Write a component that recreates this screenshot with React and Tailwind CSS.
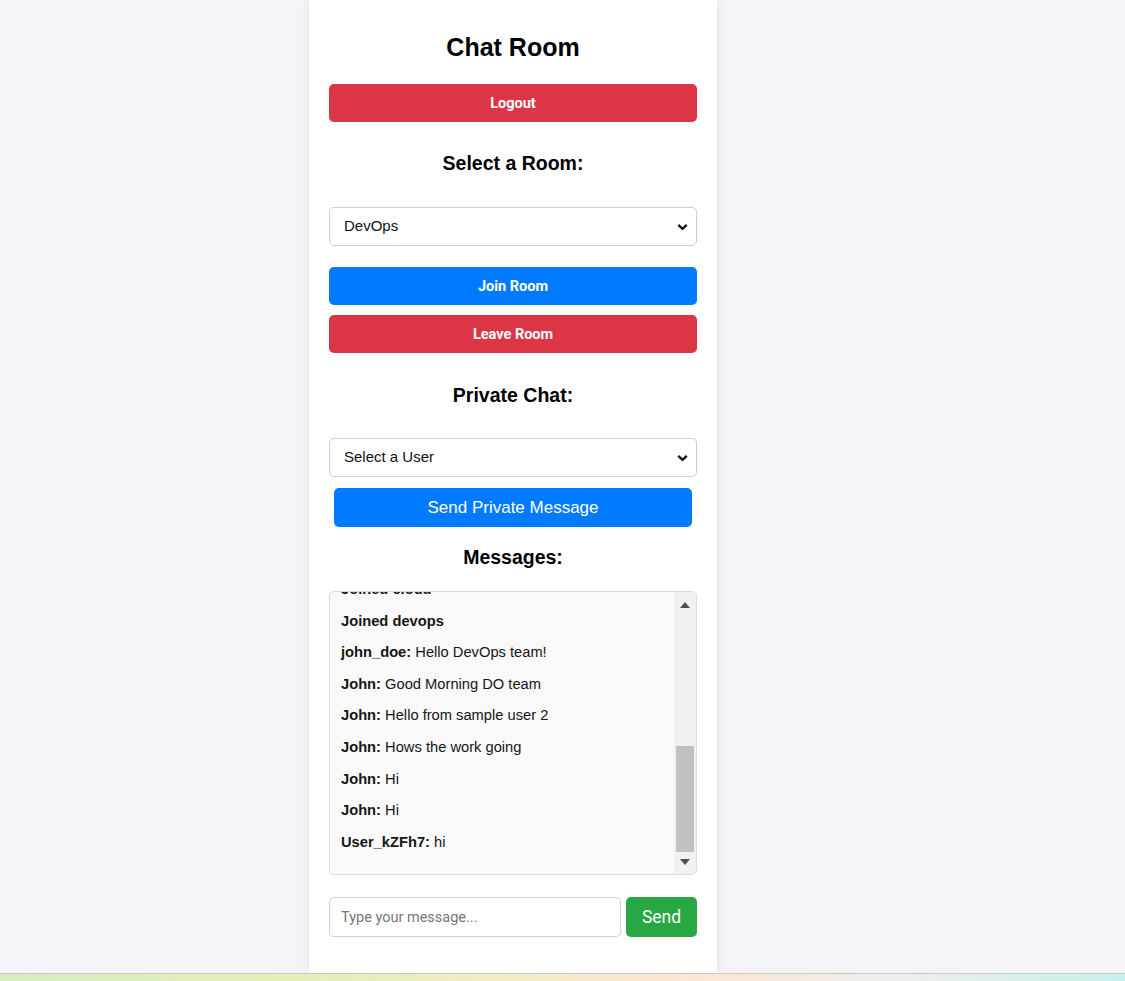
import { useState } from "react";

const messages = [
  { text: "Joined cloud" },
  { text: "Joined devops" },
  { user: "john_doe", text: "Hello DevOps team!" },
  { user: "John", text: "Good Morning DO team" },
  { user: "John", text: "Hello from sample user 2" },
  { user: "John", text: "Hows the work going" },
  { user: "John", text: "Hi" },
  { user: "John", text: "Hi" },
  { user: "User_kZFh7", text: "hi" },
];

const Chevron = () => (
  <svg
    className="pointer-events-none absolute right-[9px] top-1/2 -translate-y-1/2"
    width="11"
    height="7"
    viewBox="0 0 11 7"
  >
    <path d="M1.3 1.3 L5.5 5.3 L9.7 1.3" fill="none" stroke="#111" strokeWidth="2.4" />
  </svg>
);

function SelectBox({ value, options, onChange }) {
  return (
    <div className="relative">
      <select
        value={value}
        onChange={(e) => onChange(e.target.value)}
        className="block h-[39px] w-full appearance-none rounded-[5px] border border-[#cfcfcf] bg-white pl-[14px] text-[15px] text-[#111] outline-none"
      >
        {options.map((o) => (
          <option key={o}>{o}</option>
        ))}
      </select>
      <Chevron />
    </div>
  );
}

export default function App() {
  const [room, setRoom] = useState("DevOps");
  const [user, setUser] = useState("Select a User");
  const [draft, setDraft] = useState("");

  return (
    <div className="flex h-[981px] flex-col bg-[#f3f3f8] font-['Liberation_Sans',Arial,sans-serif]">
      <div className="flex-1 overflow-hidden">
        <div className="ml-[309px] h-full w-[408px] bg-white px-[20px] pt-[32px] shadow-[0_0_8px_rgba(0,0,0,0.08)]">
          <h2 className="h-[30px] text-center text-[25px] font-bold leading-[30px] text-black">
            Chat Room
          </h2>

          <button className="mt-[22px] block h-[38px] w-full rounded-[5px] bg-[#dc3545] pt-px font-['Roboto',sans-serif] text-[14.5px] font-bold text-white">
            Logout
          </button>

          <h3 className="mt-[29px] h-[24px] text-center text-[19.5px] font-bold leading-[24px] text-black">
            Select a Room:
          </h3>
          <div className="mt-[32px]">
            <SelectBox value={room} onChange={setRoom} options={["DevOps", "Cloud", "General"]} />
          </div>

          <button className="mt-[21px] block h-[38px] w-full rounded-[5px] bg-[#007bff] pt-px font-['Roboto',sans-serif] text-[14.5px] font-bold text-white">
            Join Room
          </button>
          <button className="mt-[10px] block h-[38px] w-full rounded-[5px] bg-[#dc3545] pt-px font-['Roboto',sans-serif] text-[14.5px] font-bold text-white">
            Leave Room
          </button>

          <h3 className="mt-[30px] h-[24px] text-center text-[19.5px] font-bold leading-[24px] text-black">
            Private Chat:
          </h3>
          <div className="mt-[31px]">
            <SelectBox value={user} onChange={setUser} options={["Select a User", "John", "john_doe"]} />
          </div>
          <button className="mx-[5px] mt-[11px] block h-[39px] w-[358px] rounded-[5px] bg-[#007bff] text-[17px] text-white">
            Send Private Message
          </button>

          <h3 className="mt-[18px] h-[24px] text-center text-[19.5px] font-bold leading-[24px] text-black">
            Messages:
          </h3>

          <div className="mt-[22px] flex h-[284px] overflow-hidden rounded-[5px] border border-[#dcdcdc] bg-[#f9f9f9]">
            <div className="flex-1 overflow-hidden pl-[11px]">
              <div className="mt-[-18px]">
                {messages.map((m, i) => (
                  <div key={i} className="h-[31.6px] text-[14.7px] leading-[31.6px] text-[#161616]">
                    {m.user ? (
                      <>
                        <strong>{m.user}:</strong> {m.text}
                      </>
                    ) : (
                      <strong>{m.text}</strong>
                    )}
                  </div>
                ))}
              </div>
            </div>
            <div className="flex w-[22px] flex-col items-center bg-[#f1f1f1]">
              <div className="flex h-[22px] w-full items-center justify-center pt-[3px]">
                <svg width="10" height="6" viewBox="0 0 10 6">
                  <path d="M0 6 L5 0 L10 6 Z" fill="#505050" />
                </svg>
              </div>
              <div className="flex-1" />
              <div className="h-[106px] w-[18px] bg-[#c1c1c1]" />
              <div className="flex h-[22px] w-full items-center justify-center pb-[3px]">
                <svg width="10" height="6" viewBox="0 0 10 6">
                  <path d="M0 0 L10 0 L5 6 Z" fill="#505050" />
                </svg>
              </div>
            </div>
          </div>

          <div className="mt-[22px] flex h-[40px] gap-[5px]">
            <input
              value={draft}
              onChange={(e) => setDraft(e.target.value)}
              placeholder="Type your message..."
              className="h-full flex-1 rounded-[5px] border border-[#cfcfcf] bg-white px-[11px] font-['Roboto',sans-serif] text-[14.5px] text-[#111] outline-none placeholder:text-[#777]"
            />
            <button className="h-full w-[71px] rounded-[5px] bg-[#28a745] font-['Roboto',sans-serif] text-[17.5px] text-white">
              Send
            </button>
          </div>
        </div>
      </div>
      <div className="h-[8px] border-t border-[#c9c9c9] bg-[linear-gradient(90deg,#d6ecc0_0%,#e3efb8_25%,#f3ecc4_45%,#fbe6d4_62%,#eeeeee_80%,#c6f0ea_100%)]" />
    </div>
  );
}
